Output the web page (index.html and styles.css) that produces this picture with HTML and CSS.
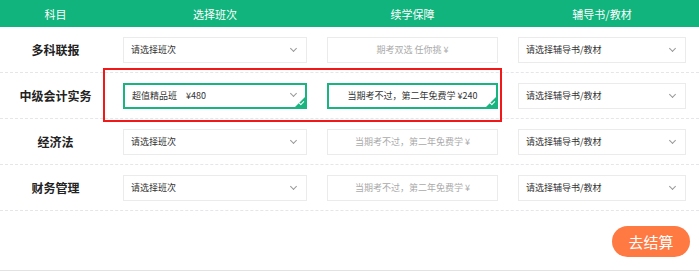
FILE: index.html
```html
<!DOCTYPE html>
<html>
<head>
    <title>选课</title>
    <link rel="stylesheet" href="styles.css">
</head>
<body>
    <div class="panel">
        <div class="head">
            <div>科目</div>
            <div>选择班次</div>
            <div>续学保障</div>
            <div>辅导书/教材</div>
        </div>

        <div class="row">
            <div class="subject">多科联报</div>
            <div class="box select">请选择班次<span class="arrow"></span></div>
            <div class="box guard">期考双选 任你挑 ¥</div>
            <div class="box select">请选择辅导书/教材<span class="arrow"></span></div>
        </div>

        <div class="row">
            <div class="subject">中级会计实务</div>
            <div class="box select on">超值精品班　¥480<span class="arrow"></span><span class="tick"></span></div>
            <div class="box guard on">当期考不过，第二年免费学 ¥240<span class="tick"></span></div>
            <div class="box select">请选择辅导书/教材<span class="arrow"></span></div>
            <div class="mark"></div>
        </div>

        <div class="row">
            <div class="subject">经济法</div>
            <div class="box select">请选择班次<span class="arrow"></span></div>
            <div class="box guard">当期考不过，第二年免费学 ¥</div>
            <div class="box select">请选择辅导书/教材<span class="arrow"></span></div>
        </div>

        <div class="row">
            <div class="subject">财务管理</div>
            <div class="box select">请选择班次<span class="arrow"></span></div>
            <div class="box guard">当期考不过，第二年免费学 ¥</div>
            <div class="box select">请选择辅导书/教材<span class="arrow"></span></div>
        </div>

        <div class="foot">
            <button class="pay">去结算</button>
        </div>
    </div>
</body>
</html>
```

FILE: styles.css
```css
body { margin: 0; font-family: "Noto Sans CJK SC", "Noto Sans", sans-serif; background: #fff; color: #333; }
.panel { width: 699px; height: 270px; border-bottom: 1px solid #e2e2e2; }

.head, .row { display: grid; grid-template-columns: 103px 184px 171px 168px; column-gap: 20px; }
.head { height: 27px; background: #10b47c; color: #fff; font-size: 11px; align-items: center; text-align: center; }
.head div:first-child { padding-left: 8px; }

.row { position: relative; height: 46px; box-sizing: border-box; align-items: center; border-bottom: 1px dashed #e4e6ea; }
.subject { padding-left: 8px; text-align: center; font-size: 12px; font-weight: bold; color: #222; }

.box { position: relative; height: 24px; line-height: 24px; border: 1px solid #ebebeb; font-size: 9px; box-sizing: content-box; }
.select { padding-left: 7px; color: #333; }
.guard { text-align: center; color: #aaa; }
.box.on { border: 2px solid #19b47f; height: 22px; line-height: 22px; }
.guard.on { color: #333; }

.arrow { position: absolute; right: 10px; top: 8px; width: 4px; height: 4px; border-right: 1px solid #999; border-bottom: 1px solid #999; transform: rotate(45deg); }
.on .arrow { right: 9px; top: 6px; }
.tick { position: absolute; right: 0; bottom: 0; width: 0; height: 0; border-left: 10px solid transparent; border-bottom: 10px solid #19b47f; }
.tick::after { content: ""; position: absolute; right: 1px; top: 4px; width: 4px; height: 2px; border-left: 1px solid #fff; border-bottom: 1px solid #fff; transform: rotate(-45deg); }

.mark { position: absolute; left: 103px; top: -5px; width: 395px; height: 50px; border: 2px solid #f01818; pointer-events: none; }

.foot { display: flex; justify-content: flex-end; padding: 15px 9px 0 0; }
.pay { width: 78px; height: 31px; border: none; border-radius: 16px; background: #ff7a43; color: #fff; font-family: inherit; font-size: 15px; cursor: pointer; }
```
